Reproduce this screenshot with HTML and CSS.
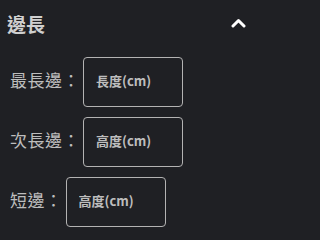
FILE: index.html
```html
<!DOCTYPE html>
<html lang="zh-Hant">
<head>
<meta charset="utf-8">
<link rel="stylesheet" href="styles.css">
</head>
<body>
<section class="panel">
  <div class="header">
    <h2 class="title">邊長</h2>
    <svg class="chevron" width="15" height="10" viewBox="0 0 15 10">
      <polyline points="2,8 7.5,2.5 13,8" fill="none" stroke="#ffffff" stroke-width="3" stroke-linecap="round" stroke-linejoin="round"/>
    </svg>
  </div>
  <div class="rows">
    <label class="row"><span class="label">最長邊：</span><input class="field" type="text" placeholder="長度(cm)"></label>
    <label class="row"><span class="label">次長邊：</span><input class="field" type="text" placeholder="高度(cm)"></label>
    <label class="row"><span class="label">短邊：</span><input class="field" type="text" placeholder="高度(cm)"></label>
  </div>
</section>
</body>
</html>
```
FILE: styles.css
```css
html, body {
  margin: 0;
  padding: 0;
  background: #1f2024;
}
body {
  width: 259px;
  height: 234px;
  overflow: hidden;
  font-family: "Noto Sans CJK TC", "Noto Sans", sans-serif;
}
.panel {
  display: flex;
  flex-direction: column;
}
.header {
  height: 47px;
  box-sizing: border-box;
  padding: 10px 13px 0 7px;
  display: flex;
  align-items: flex-start;
  justify-content: space-between;
}
.title {
  margin: 0;
  font-size: 19px;
  line-height: 27px;
  font-weight: 700;
  color: #cfcfcf;
}
.chevron {
  margin-top: 8px;
}
.rows {
  display: flex;
  flex-direction: column;
  gap: 10px;
  padding: 10px 0 0 10px;
}
.row {
  display: flex;
  align-items: center;
  gap: 3px;
}
.label {
  font-size: 17px;
  letter-spacing: 0.5px;
  line-height: 24px;
  color: #bdbdbd;
  font-weight: 400;
  margin-top: -5px;
}
.field {
  width: 100px;
  height: 50px;
  box-sizing: border-box;
  margin: 0;
  border: 1px solid #b3b3b3;
  border-radius: 4px;
  background: transparent;
  padding: 0 0 3px 12px;
  font-family: "Noto Sans CJK TC", "Open Sans", sans-serif;
  font-size: 13px;
  font-weight: 600;
  color: #bdbdbd;
  outline: none;
}
.field::placeholder {
  color: #bdbdbd;
  opacity: 1;
}
```
